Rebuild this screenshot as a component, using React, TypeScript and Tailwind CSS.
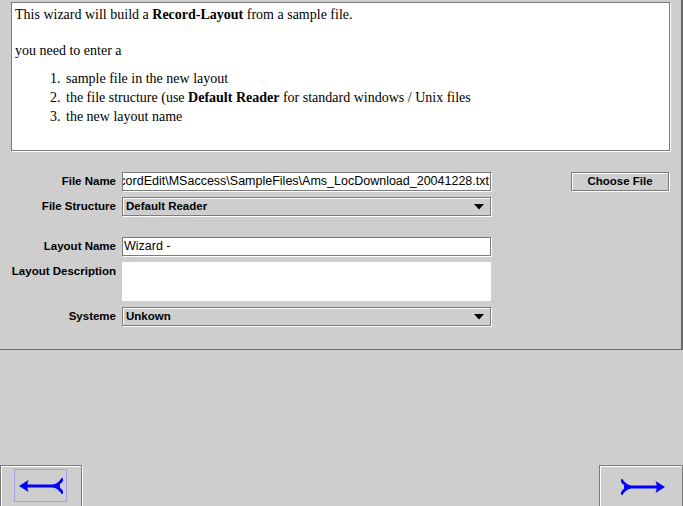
import React from 'react';

// Wizard page: build a Record-Layout from a sample file

const sans = { fontFamily: '"Liberation Sans", Arial, sans-serif' };
const serif = { fontFamily: '"Liberation Serif", "Times New Roman", serif' };

const Arrow: React.FC<{ flip?: boolean }> = ({ flip }) => (
  <svg width="44" height="18" viewBox="0 0 44 18" className={flip ? '-scale-x-100' : ''}>
    <path d="M0 9 L9.5 3 Q7 9 9.5 15 Z" fill="#0000ff" />
    <rect x="5" y="7.5" width="36" height="3" fill="#0000ff" />
    <path d="M44 1.5 Q40 8 34.5 9 Q40 10 44 16.5" stroke="#0000ff" strokeWidth="2.8" fill="none" />
  </svg>
);

const Caret = () => (
  <svg width="10" height="6" viewBox="0 0 10 6" className="mr-[6px]">
    <path d="M0 0 H10 L5 5.5 Z" fill="#000" />
  </svg>
);

const Label: React.FC<{ text: string; top?: boolean }> = ({ text, top }) => (
  <div
    className={`w-[116px] shrink-0 text-right text-[11.5px] font-bold text-black whitespace-nowrap ${top ? 'self-start h-[18px] leading-[18px]' : ''}`}
  >
    {text}
  </div>
);

const TextField: React.FC<{ value: string; right?: boolean }> = ({ value, right }) => (
  <div
    className={`ml-[6px] w-[369px] h-[19px] bg-white border border-[#7b7b7b] shadow-[1px_1px_0_#ffffff] flex items-center overflow-hidden text-[12.5px] text-black ${right ? 'justify-end pr-[1px]' : 'pl-[1px]'}`}
  >
    <span className="whitespace-nowrap shrink-0">{value}</span>
  </div>
);

const Combo: React.FC<{ value: string }> = ({ value }) => (
  <div className="ml-[6px] w-[369px] h-[19px] bg-[#cecece] border border-[#7b7b7b] shadow-[inset_1px_1px_0_#ffffff,1px_1px_0_#ffffff] flex items-center justify-between pl-[3px] text-[11.5px] font-bold text-black">
    <span>{value}</span>
    <Caret />
  </div>
);

export default function App() {
  return (
    <div className="w-[683px] h-[506px] bg-[#cecece] flex flex-col overflow-hidden" style={sans}>
      {/* Top panel */}
      <div className="h-[350px] shrink-0 border-b border-r-2 border-[#6a6a6a] flex flex-col">
        {/* Help text */}
        <div
          className="ml-[11px] mt-[2px] w-[659px] h-[149px] bg-white border border-[#7b7b7b] shadow-[1px_1px_0_#ffffff] pt-[2px] pl-[3px] text-[14px] leading-[19px] text-black"
          style={serif}
        >
          <p>
            This wizard will build a <b>Record-Layout</b> from a sample file.
          </p>
          <p className="mt-[17px]">you need to enter a</p>
          <div className="mt-[9px] pl-[35px]">
            <div className="flex">
              <span className="w-[16px]">1.</span>
              <span>sample file in the new layout</span>
            </div>
            <div className="flex">
              <span className="w-[16px]">2.</span>
              <span>
                the file structure (use <b>Default Reader</b> for standard windows / Unix files
              </span>
            </div>
            <div className="flex">
              <span className="w-[16px]">3.</span>
              <span>the new layout name</span>
            </div>
          </div>
        </div>

        {/* Form */}
        <div className="mt-[21px] flex flex-col">
          <div className="flex items-center">
            <Label text="File Name" />
            <TextField value="cordEdit\MSaccess\SampleFiles\Ams_LocDownload_20041228.txt" right />
            <button className="ml-[80px] w-[98px] h-[19px] bg-[#cecece] border border-[#7b7b7b] shadow-[inset_1px_1px_0_#ffffff,1px_1px_0_#ffffff] text-[11.5px] font-bold text-black flex items-center justify-center">
              Choose File
            </button>
          </div>
          <div className="mt-[6px] flex items-center">
            <Label text="File Structure" />
            <Combo value="Default Reader" />
          </div>
          <div className="mt-[21px] flex items-center">
            <Label text="Layout Name" />
            <TextField value="Wizard -" />
          </div>
          <div className="mt-[6px] flex">
            <Label text="Layout Description" top />
            <div className="ml-[6px] w-[369px] h-[39px] bg-white" />
          </div>
          <div className="mt-[6px] flex items-center">
            <Label text="Systeme" />
            <Combo value="Unkown" />
          </div>
        </div>
      </div>

      {/* Navigation */}
      <div className="flex-1 flex items-start justify-between pt-[115px]">
        <button className="w-[82px] h-[50px] border border-[#7b7b7b] shadow-[inset_1px_1px_0_#ffffff,1px_1px_0_#ffffff] flex justify-center items-start">
          <div className="mt-[3px] -ml-[1px] w-[53px] h-[33px] border border-[#a3a3dd] flex items-center justify-center">
            <Arrow />
          </div>
        </button>
        <button className="w-[84px] h-[50px] border border-[#7b7b7b] shadow-[inset_1px_1px_0_#ffffff] flex justify-start items-start pl-[21px] pt-[12px]">
          <Arrow flip />
        </button>
      </div>
    </div>
  );
}
